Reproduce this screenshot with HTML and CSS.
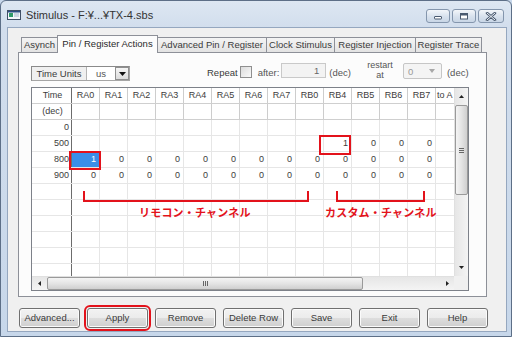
FILE: index.html
```html
<!DOCTYPE html>
<html>
<head>
<meta charset="utf-8">
<link rel="stylesheet" href="styles.css">
</head>
<body>
<div class="window">
  <div class="titlebar">
    <svg class="appicon" width="14" height="10" viewBox="0 0 14 10">
      <rect x="0.5" y="0.5" width="13" height="9" fill="#f4f7fb" stroke="#3f4f66"/>
      <rect x="1" y="1" width="12" height="1.5" fill="#2c4f86"/>
      <rect x="2" y="3" width="4" height="4" fill="#2f9a6a"/>
      <rect x="7" y="3.5" width="5" height="1" fill="#9fb3cc"/>
      <rect x="7" y="5.5" width="5" height="1" fill="#9fb3cc"/>
    </svg>
    <span class="title">Stimulus - F:¥...¥TX-4.sbs</span>
    <div class="caps">
      <div class="cap"><svg width="10" height="8" viewBox="0 0 10 8"><rect x="1.5" y="4.5" width="7" height="2.5" rx="0.5" fill="#fff" stroke="#4a5a70"/></svg></div>
      <div class="cap"><svg width="10" height="8" viewBox="0 0 10 8"><rect x="1.5" y="1.5" width="7" height="5.5" fill="#fff" stroke="#4a5a70"/><rect x="2" y="2" width="6" height="1.5" fill="#4a5a70"/></svg></div>
      <div class="cap close"><svg width="12" height="9" viewBox="0 0 12 9"><path d="M2 1 L10 8 M10 1 L2 8" stroke="#4a5a70" stroke-width="2.6" stroke-linecap="round"/><path d="M2 1 L10 8 M10 1 L2 8" stroke="#f4f7fb" stroke-width="1" stroke-linecap="round"/></svg></div>
    </div>
  </div>
  <div class="client">
    <div class="tabs">
      <div class="tab w1">Asynch</div>
      <div class="tab sel w2">Pin / Register Actions</div>
      <div class="tab w3">Advanced Pin / Register</div>
      <div class="tab w4">Clock Stimulus</div>
      <div class="tab w5">Register Injection</div>
      <div class="tab w6">Register Trace</div>
    </div>
    <div class="panel">
      <div class="toolbar">
        <div class="units">
          <span class="ulabel">Time Units</span>
          <span class="ufield">us</span>
          <span class="ubtn"><svg width="7" height="4" viewBox="0 0 7 4"><path d="M0 0 H7 L3.5 4 Z" fill="#111"/></svg></span>
        </div>
        <span class="repeat">Repeat</span>
        <span class="chk"></span>
        <span class="after">after:</span>
        <span class="num">1</span>
        <span class="dec1">(dec)</span>
        <span class="restart">restart<br>at</span>
        <span class="combo"><span>0</span><svg width="6" height="4" viewBox="0 0 6 4"><path d="M0 0 H6 L3 4 Z" fill="#a8a8a8"/></svg></span>
        <span class="dec2">(dec)</span>
      </div>
      <div class="grid">
        <div class="view">
          <div class="r h"><div class="c t">Time</div><div class="c">RA0</div><div class="c">RA1</div><div class="c">RA2</div><div class="c">RA3</div><div class="c">RA4</div><div class="c">RA5</div><div class="c">RA6</div><div class="c">RA7</div><div class="c">RB0</div><div class="c">RB4</div><div class="c">RB5</div><div class="c">RB6</div><div class="c">RB7</div><div class="c a">to A</div></div>
          <div class="r h2"><div class="c t">(dec)</div><div class="c"></div><div class="c"></div><div class="c"></div><div class="c"></div><div class="c"></div><div class="c"></div><div class="c"></div><div class="c"></div><div class="c"></div><div class="c"></div><div class="c"></div><div class="c"></div><div class="c"></div><div class="c a"></div></div>
          <div class="r"><div class="c t">0</div><div class="c"></div><div class="c"></div><div class="c"></div><div class="c"></div><div class="c"></div><div class="c"></div><div class="c"></div><div class="c"></div><div class="c"></div><div class="c"></div><div class="c"></div><div class="c"></div><div class="c"></div><div class="c a"></div></div>
          <div class="r"><div class="c t">500</div><div class="c"></div><div class="c"></div><div class="c"></div><div class="c"></div><div class="c"></div><div class="c"></div><div class="c"></div><div class="c"></div><div class="c"></div><div class="c">1</div><div class="c">0</div><div class="c">0</div><div class="c">0</div><div class="c a"></div></div>
          <div class="r"><div class="c t">800</div><div class="c sel">1</div><div class="c">0</div><div class="c">0</div><div class="c">0</div><div class="c">0</div><div class="c">0</div><div class="c">0</div><div class="c">0</div><div class="c">0</div><div class="c">0</div><div class="c">0</div><div class="c">0</div><div class="c">0</div><div class="c a"></div></div>
          <div class="r"><div class="c t">900</div><div class="c">0</div><div class="c">0</div><div class="c">0</div><div class="c">0</div><div class="c">0</div><div class="c">0</div><div class="c">0</div><div class="c">0</div><div class="c">0</div><div class="c">0</div><div class="c">0</div><div class="c">0</div><div class="c">0</div><div class="c a"></div></div>
          <div class="r"><div class="c t"></div><div class="c"></div><div class="c"></div><div class="c"></div><div class="c"></div><div class="c"></div><div class="c"></div><div class="c"></div><div class="c"></div><div class="c"></div><div class="c"></div><div class="c"></div><div class="c"></div><div class="c"></div><div class="c a"></div></div>
          <div class="r"><div class="c t"></div><div class="c"></div><div class="c"></div><div class="c"></div><div class="c"></div><div class="c"></div><div class="c"></div><div class="c"></div><div class="c"></div><div class="c"></div><div class="c"></div><div class="c"></div><div class="c"></div><div class="c"></div><div class="c a"></div></div>
          <div class="r"><div class="c t"></div><div class="c"></div><div class="c"></div><div class="c"></div><div class="c"></div><div class="c"></div><div class="c"></div><div class="c"></div><div class="c"></div><div class="c"></div><div class="c"></div><div class="c"></div><div class="c"></div><div class="c"></div><div class="c a"></div></div>
          <div class="r"><div class="c t"></div><div class="c"></div><div class="c"></div><div class="c"></div><div class="c"></div><div class="c"></div><div class="c"></div><div class="c"></div><div class="c"></div><div class="c"></div><div class="c"></div><div class="c"></div><div class="c"></div><div class="c"></div><div class="c a"></div></div>
          <div class="r"><div class="c t"></div><div class="c"></div><div class="c"></div><div class="c"></div><div class="c"></div><div class="c"></div><div class="c"></div><div class="c"></div><div class="c"></div><div class="c"></div><div class="c"></div><div class="c"></div><div class="c"></div><div class="c"></div><div class="c a"></div></div>
          <div class="r"><div class="c t"></div><div class="c"></div><div class="c"></div><div class="c"></div><div class="c"></div><div class="c"></div><div class="c"></div><div class="c"></div><div class="c"></div><div class="c"></div><div class="c"></div><div class="c"></div><div class="c"></div><div class="c"></div><div class="c a"></div></div>
          <div class="mark box1"></div>
          <div class="mark box2"></div>
          <div class="mark br1"></div>
          <div class="mark br2"></div>
          <div class="mark tx1">リモコン・チャンネル</div>
          <div class="mark tx2">カスタム・チャンネル</div>
        </div>
        <div class="vscroll">
          <div class="varrow"><svg width="5" height="3" viewBox="0 0 5 3"><path d="M0 3 L2.5 0 L5 3 Z" fill="#222"/></svg></div>
          <div class="vthumb"><svg width="5" height="5" viewBox="0 0 5 5"><path d="M0 0.5 H5 M0 2.5 H5 M0 4.5 H5" stroke="#666" stroke-width="1"/></svg></div>
          <div class="fill"></div>
          <div class="varrow down"><svg width="5" height="3" viewBox="0 0 5 3"><path d="M0 0 L5 0 L2.5 3 Z" fill="#222"/></svg></div>
        </div>
        <div class="hscroll">
          <div class="harrow"><svg width="3" height="5" viewBox="0 0 3 5"><path d="M3 0 L3 5 L0 2.5 Z" fill="#222"/></svg></div>
          <div class="hthumb"><svg width="5" height="5" viewBox="0 0 5 5"><path d="M0.5 0 V5 M2.5 0 V5 M4.5 0 V5" stroke="#666" stroke-width="1"/></svg></div>
          <div class="fill"></div>
          <div class="harrow"><svg width="3" height="5" viewBox="0 0 3 5"><path d="M0 0 L0 5 L3 2.5 Z" fill="#222"/></svg></div>
        </div>
        <div class="corner"></div>
      </div>
    </div>
    <div class="buttons">
      <div class="btn">Advanced...</div>
      <div class="btn hl">Apply</div>
      <div class="btn">Remove</div>
      <div class="btn">Delete Row</div>
      <div class="btn">Save</div>
      <div class="btn">Exit</div>
      <div class="btn">Help</div>
    </div>
  </div>
</div>
</body>
</html>
```
FILE: styles.css
```css
* { box-sizing: border-box; }
html, body { margin: 0; padding: 0; }
body {
  width: 512px;
  height: 337px;
  overflow: hidden;
  background: #c8d8eb;
  font-family: "Liberation Sans", Arial, sans-serif;
  font-size: 9.5px;
  color: #2a2a2a;
}
.window {
  width: 512px;
  height: 337px;
  border: 1px solid #5d6f87;
  border-radius: 6px 6px 0 0;
  background: linear-gradient(#dde7f2 0, #d2deed 26px, #c7d7ea 100%);
  display: flex;
  flex-direction: column;
}
.titlebar {
  height: 26px;
  flex: none;
  display: flex;
  align-items: flex-start;
}
.appicon { margin: 9px 0 0 6px; flex: none; }
.title {
  margin: 8px 0 0 5px;
  font-size: 11px;
  line-height: 13px;
  color: #333;
}
.caps {
  margin: 8px 7px 0 auto;
  display: flex;
  gap: 2px;
}
.cap {
  width: 24px;
  height: 14px;
  border: 1px solid #8496ad;
  border-radius: 3px;
  background: linear-gradient(#f3f6fa, #d7e1ed 55%, #c9d6e6);
  display: flex;
  align-items: center;
  justify-content: center;
}
.cap.close { width: 26px; }

.client {
  margin-left: 6px;
  width: 500px;
  height: 305px;
  border: 1px solid #95a7bf;
  background: #f0f0f0;
  flex: none;
}
.tabs {
  display: flex;
  align-items: flex-end;
  height: 17px;
  margin: 7px 0 0 13px;
  position: relative;
  z-index: 1;
}
.tab {
  height: 15px;
  border: 1px solid #8d9098;
  border-bottom: none;
  background: linear-gradient(#f4f4f4, #e3e3e3);
  margin-left: -1px;
  text-align: center;
  line-height: 14px;
  white-space: nowrap;
  color: #3a3a3a;
}
.tab.w1 { width: 37px; margin-left: 0; }
.tab.w2 { width: 101px; }
.tab.w3 { width: 110px; }
.tab.w4 { width: 69px; }
.tab.w5 { width: 82px; }
.tab.w6 { width: 67px; }
.tab.sel {
  height: 18px;
  margin-bottom: -1px;
  background: #fcfcfc;
  position: relative;
  z-index: 2;
  line-height: 15px;
  color: #2a2a2a;
}
.panel {
  margin-left: 10px;
  width: 469px;
  height: 245px;
  border: 1px solid #8d9098;
  background: #fcfcfc;
}
.toolbar {
  display: flex;
  align-items: center;
  height: 18px;
  margin: 10px 0 0 12px;
}
.units {
  align-self: flex-end;
  width: 99px;
  height: 15px;
  border: 1px solid #a5a5a5;
  border-top-color: #8a8a8a;
  border-left-color: #8a8a8a;
  display: flex;
  background: #f0f0f0;
}
.ulabel {
  width: 55px;
  text-align: center;
  line-height: 13px;
  border-right: 1px solid #b5b5b5;
  color: #3a3a3a;
}
.ufield {
  width: 28px;
  background: #fff;
  text-align: center;
  line-height: 13px;
  color: #555;
}
.ubtn {
  width: 14px;
  border: 1px solid #8f8f8f;
  background: linear-gradient(#f5f5f5, #dcdcdc);
  display: flex;
  align-items: center;
  justify-content: center;
}
.repeat { margin-left: 77px; color: #3a3a3a; }
.chk {
  margin-left: 2px;
  width: 12px;
  height: 12px;
  border: 1px solid #8f8f8f;
  background: linear-gradient(135deg, #dcdcdc, #fafafa);
}
.after { margin-left: 6px; color: #555; }
.num {
  margin-left: 2px;
  width: 45px;
  height: 15px;
  margin-top: -3px;
  border: 1px solid #c9c9c9;
  background: #f3f3f3;
  text-align: right;
  padding-right: 6px;
  line-height: 13px;
  color: #666;
}
.dec1 { margin-left: 3px; color: #555; }
.restart {
  margin-left: 15px;
  width: 28px;
  text-align: center;
  font-size: 9px;
  line-height: 10px;
  margin-top: -4px;
  color: #555;
}
.combo {
  margin-left: 9px;
  width: 39px;
  height: 16px;
  margin-top: -2px;
  border: 1px solid #c6c6c6;
  border-radius: 2px;
  background: #f4f4f4;
  display: flex;
  align-items: center;
  justify-content: space-between;
  padding: 0 6px 0 4px;
  color: #999;
}
.dec2 { margin-left: 5px; color: #555; }

.grid {
  margin: 6px 0 0 12px;
  width: 438px;
  height: 204px;
  border: 1px solid #7d8189;
  display: grid;
  grid-template-columns: 1fr 14px;
  grid-template-rows: 1fr 14px;
  background: #fff;
}
.view {
  position: relative;
  overflow: hidden;
}
.r {
  display: flex;
  height: 16px;
  border-bottom: 1px solid #e6e6e6;
}
.r.h, .r.h2 { border-bottom-color: #cfcfcf; }
.c {
  flex: none;
  width: 28px;
  height: 15px;
  border-right: 1px solid #e6e6e6;
  font-size: 9px;
  line-height: 15px;
  text-align: right;
  padding-right: 3px;
  color: #3c3c3c;
  white-space: nowrap;
  overflow: hidden;
}
.r.h .c, .r.h2 .c { border-right-color: #cdcdcd; text-align: center; padding: 0; }
.c.t {
  width: 40px;
  border-right: 1px solid #6c6c6c !important;
  padding-right: 2px;
}
.r.h .c.t, .r.h2 .c.t { padding: 0 0 0 2px; }
.c.a { width: 19px; border-right-color: #cdcdcd; }
.r.h .c.a { text-align: left; padding-left: 1px; }
.c.sel { background: #3a8ee8; color: #fff; }

.mark { position: absolute; }
.box1 { left: 37px; top: 63px; width: 32px; height: 19px; border: 2px solid #e3121b; }
.box2 { left: 287px; top: 47px; width: 32px; height: 20px; border: 2px solid #e3121b; }
.br1, .br2 {
  top: 103px;
  height: 11px;
  border: 2px solid #e3121b;
  border-top: none;
}
.br1 { left: 51px; width: 226px; }
.br2 { left: 304px; width: 89px; }
.tx1, .tx2 {
  top: 118px;
  font-family: "Noto Sans CJK JP", sans-serif;
  font-weight: bold;
  font-size: 11px;
  line-height: 13px;
  color: #e3121b;
  letter-spacing: 0.2px;
  white-space: nowrap;
}
.tx1 { left: 107px; }
.tx2 { left: 293px; }

.vscroll {
  display: flex;
  flex-direction: column;
  background: linear-gradient(90deg, #e6e6e6, #f4f4f4);
  border-left: 1px solid #e0e0e0;
}
.varrow {
  height: 16px;
  display: flex;
  align-items: center;
  justify-content: center;
  flex: none;
}
.varrow.down { height: 18px; }
.vthumb {
  margin: 1px 0 0 0;
  height: 90px;
  border: 1px solid #9a9a9a;
  border-radius: 2px;
  background: linear-gradient(90deg, #f4f4f4, #e4e4e4 50%, #cfcfcf);
  display: flex;
  align-items: center;
  justify-content: center;
  flex: none;
}
.fill { flex: 1; }
.hscroll {
  display: flex;
  background: linear-gradient(#e6e6e6, #f4f4f4);
  border-top: 1px solid #e0e0e0;
}
.harrow {
  width: 14px;
  display: flex;
  align-items: center;
  justify-content: center;
  flex: none;
}
.hthumb {
  margin-left: 1px;
  width: 316px;
  border: 1px solid #9a9a9a;
  border-radius: 2px;
  background: linear-gradient(#f4f4f4, #e4e4e4 50%, #cfcfcf);
  display: flex;
  align-items: center;
  justify-content: center;
  flex: none;
}
.corner { background: #f0f0f0; }

.buttons {
  display: flex;
  gap: 7px;
  margin: 11px 0 0 11px;
}
.btn {
  width: 61px;
  height: 20px;
  border: 1px solid #707070;
  border-radius: 3px;
  background: linear-gradient(#f2f2f2, #ebebeb 50%, #dddddd 51%, #cfcfcf);
  box-shadow: inset 0 0 0 1px #fbfbfb;
  text-align: center;
  line-height: 18px;
  color: #3a3a3a;
}
.btn.hl {
  outline: 2px solid #e3121b;
  outline-offset: 1px;
}
```
